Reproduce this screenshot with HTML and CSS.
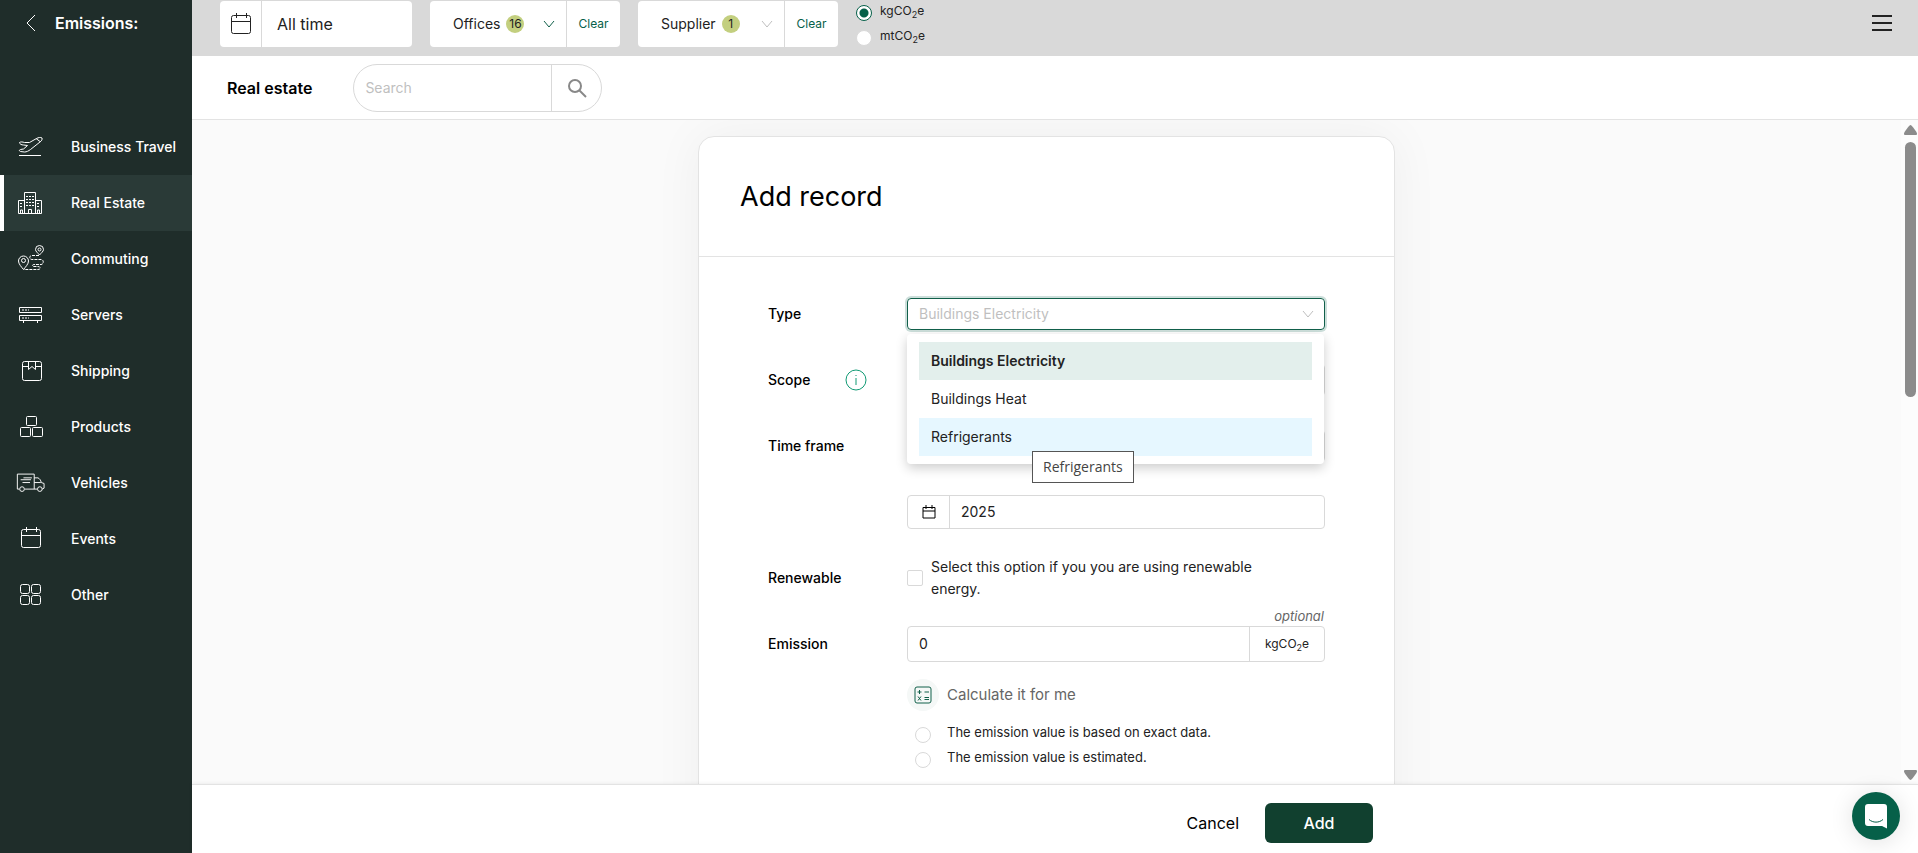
FILE: index.html
```html
<!DOCTYPE html>
<html lang="en">

<head>
  <meta charset="utf-8">
  <title>Emissions - Real estate</title>
  <link rel="stylesheet" href="styles.css">
</head>

<body>
  <aside class="sidebar">
    <div class="sidebar-header">
      <button class="back-btn" aria-label="Back">
        <svg width="10" height="18" viewBox="0 0 10 18"><path d="M9 1L1 9l8 8" /></svg>
      </button>
      <span>Emissions:</span>
    </div>

    <nav class="nav">
      <a href="#">
        <svg class="nav-icon" viewBox="0 0 30 30">
          <path d="M4 23.500h22M4.500 10.500c1.500-1 3-.5 5 0h5l7-4c2-1 4-1.500 5.500-.5.500 1.500-.5 3-2 4l-9.500 7.500c-2 1.500-4 2.500-6 2.500l-4-.5c-1.500-.5-1.500-1.500 0-2l3-.5 4-3.500-4-.5c-2 0-4-1-4-2.500zM21 6.500l4 3" />
        </svg>
        Business Travel
      </a>
      <a href="#" class="active">
        <svg class="nav-icon" viewBox="0 0 30 30">
          <path d="M9.500 25.500v-21h11v21M9.500 12.500h-6v13h23v-13h-6M13.500 25.500v-4h3v4M5.500 25v-3h2v3M22.500 25v-3h2v3" />
          <path d="M11 8.500h8M11 11.500h8M11 14.500h8M11 17.500h8M5 15.500h3M5 18.500h3M22 15.500h3M22 18.500h3" stroke-dasharray="2 1" />
        </svg>
        Real Estate
      </a>
      <a href="#">
        <svg class="nav-icon" viewBox="0 0 30 30">
          <path d="M8.500 25.500c-2-2.500-5-5.500-5-8.500a5 5 0 0 1 10 0c0 3-3 6-5 8.500zM24.500 11c-1.500-2-4-3.500-4-5.500a3.500 3.500 0 0 1 8 0c0 2-2.500 3.500-4 5.500z" />
          <circle cx="8.500" cy="16.500" r="2" />
          <circle cx="24.500" cy="5.500" r="1.500" />
          <path d="M24 11.500h-7c-3 0-3 4 0 4h9c3 0 3 5 0 5h-7c-2 0-2 2 0 2h4c3 0 3 3 0 3H9" stroke-dasharray="3 1" />
        </svg>
        Commuting
      </a>
      <a href="#">
        <svg class="nav-icon" viewBox="0 0 30 30">
          <path d="M4.500 7.500h22v5h-22zM4.500 15.500h22v5h-22zM8.500 21v2M22.500 21v2" />
          <path d="M7 10h7M7 18h7" stroke-dasharray="2 1" />
        </svg>
        Servers
      </a>
      <a href="#">
        <svg class="nav-icon" viewBox="0 0 30 30">
          <rect x="7.500" y="5.500" width="19" height="19" rx="2" />
          <path d="M7.500 10.500h6M20.500 10.500h6M13.500 5.500v8l3.500-3 3.500 3v-8" />
        </svg>
        Shipping
      </a>
      <a href="#">
        <svg class="nav-icon" viewBox="0 0 30 30">
          <rect x="11.500" y="4.500" width="10" height="9" rx="1" />
          <rect x="5.500" y="15.500" width="10" height="9" rx="1" />
          <rect x="17.500" y="15.500" width="10" height="9" rx="1" />
        </svg>
        Products
      </a>
      <a href="#">
        <svg class="nav-icon" viewBox="0 0 32 30">
          <path d="M4.500 21.500h-2v-16h18v16M10.500 21.500h13M20.500 9.500h4c2 1 3 2.500 3.500 5l3 1v5l-2 1M20.500 14.500h7M9 9.500h9M6 11.500h11M8 14.500h8" />
          <circle cx="7.500" cy="21.500" r="2.500" />
          <circle cx="26.500" cy="21.500" r="2.500" />
        </svg>
        Vehicles
      </a>
      <a href="#">
        <svg class="nav-icon" viewBox="0 0 30 30">
          <rect x="6.500" y="5.500" width="19" height="18" rx="2" />
          <path d="M6.500 11.500h19M11.500 3v5M21.500 3v5" />
        </svg>
        Events
      </a>
      <a href="#">
        <svg class="nav-icon" viewBox="0 0 30 30">
          <rect x="5.500" y="4.500" width="9" height="9" rx="2" />
          <rect x="16.500" y="4.500" width="9" height="9" rx="2" />
          <rect x="5.500" y="15.500" width="9" height="9" rx="2" />
          <rect x="16.500" y="15.500" width="9" height="9" rx="2" />
        </svg>
        Other
      </a>
    </nav>
  </aside>

  <div class="page">
    <header class="topbar">
      <div class="filter filter-date">
        <span class="filter-icon">
          <svg width="20" height="22" viewBox="0 0 20 22"><path d="M2.500 2.500h15a2 2 0 0 1 2 2v14a2 2 0 0 1-2 2h-15a2 2 0 0 1-2-2v-14a2 2 0 0 1 2-2zM.5 8.500h19M5.500 0v5M15.500 0v5" /></svg>
        </span>
        <input type="text" value="All time" aria-label="Period" readonly>
      </div>

      <div class="filter filter-offices">
        <button class="filter-main">
          Offices <span class="count">16</span>
          <svg class="chevron" width="12" height="8" viewBox="0 0 12 8"><path d="M1 1l5 6 5-6" /></svg>
        </button>
        <button class="clear-btn">Clear</button>
      </div>

      <div class="filter filter-supplier">
        <button class="filter-main">
          Supplier <span class="count">1</span>
          <svg class="chevron muted" width="12" height="8" viewBox="0 0 12 8"><path d="M1 1l5 6 5-6" /></svg>
        </button>
        <button class="clear-btn">Clear</button>
      </div>

      <div class="units">
        <label><input type="radio" name="unit" checked><span>kgCO<sub>2</sub>e</span></label>
        <label><input type="radio" name="unit"><span>mtCO<sub>2</sub>e</span></label>
      </div>

      <button class="menu-btn" aria-label="Menu">
        <svg width="20" height="18" viewBox="0 0 20 18"><path d="M0 2h20M0 9h20M0 16h20" /></svg>
      </button>
    </header>

    <div class="subheader">
      <h2>Real estate</h2>
      <form class="search">
        <input type="search" placeholder="Search" aria-label="Search">
        <button type="button" aria-label="Search">
          <svg width="20" height="20" viewBox="0 0 20 20"><circle cx="8" cy="8" r="6" /><path d="M12.500 12.500L19 19" /></svg>
        </button>
      </form>
    </div>

    <div class="content">
      <main class="scroll-area">
        <form class="card" id="record-form">
          <div class="card-header">
            <h1>Add record</h1>
          </div>

          <div class="card-body">
            <div class="row">
              <label for="type">Type</label>
              <div class="control">
                <div class="combo">
                  <input type="text" id="type" role="combobox" aria-expanded="true" aria-controls="type-list" placeholder="Buildings Electricity">
                  <svg class="chevron muted" width="12" height="8" viewBox="0 0 12 8"><path d="M1 1l5 6 5-6" /></svg>
                </div>
                <ul class="dropdown" id="type-list" role="listbox">
                  <li class="selected" role="option" aria-selected="true">Buildings Electricity</li>
                  <li role="option">Buildings Heat</li>
                  <li class="hover" role="option">Refrigerants</li>
                </ul>
                <div class="tooltip" role="tooltip">Refrigerants</div>
              </div>
            </div>

            <div class="row">
              <label for="scope">Scope</label>
              <svg class="info" width="22" height="22" viewBox="0 0 22 22"><circle cx="11" cy="11" r="10" /><path d="M11 9v7M11 6v1" /></svg>
              <div class="control"><select id="scope"></select></div>
            </div>

            <div class="row">
              <label for="timeframe">Time frame</label>
              <div class="control"><select id="timeframe"></select></div>
            </div>

            <div class="row">
              <div class="control group group-year">
                <span class="group-icon">
                  <svg width="14" height="14" viewBox="0 0 14 14"><path d="M1 2.500h12v10.500H1zM1 6h12M4 0v4M10 0v4" /></svg>
                </span>
                <input type="text" value="2025" aria-label="Year">
              </div>
            </div>

            <div class="row">
              <label for="renewable">Renewable</label>
              <div class="control check">
                <input type="checkbox" id="renewable">
                <label for="renewable">Select this option if you you are using renewable energy.</label>
              </div>
            </div>

            <div class="row">
              <label for="emission">Emission</label>
              <div class="control group">
                <span class="optional">optional</span>
                <input type="text" id="emission" value="0">
                <span class="suffix"><span>kgCO<sub>2</sub>e</span></span>
              </div>
            </div>

            <div class="extra">
              <button type="button" class="calc-btn">
                <span class="calc-icon">
                  <svg width="18" height="18" viewBox="0 0 18 18">
                    <rect x="1" y="1" width="16" height="16" rx="2" />
                    <path d="M3.500 6h4M5.500 4v4M10.500 6h4.500M4 10.500l3 4M7 10.500l-3 4M10.500 11.500h4.500M10.500 13.500h4.500" />
                  </svg>
                </span>
                Calculate it for me
              </button>
              <label class="option"><input type="radio" name="accuracy"><span>The emission value is based on exact data.</span></label>
              <label class="option"><input type="radio" name="accuracy"><span>The emission value is estimated.</span></label>
            </div>
          </div>
        </form>
      </main>

      <div class="scrollbar">
        <svg width="13" height="10" viewBox="0 0 13 10"><path d="M6.500 0c1 0 6.500 7 6.500 8.500 0 1-.5 1.500-1 1.500H1c-.5 0-1-.5-1-1.500C0 7 5.500 0 6.500 0z" /></svg>
        <div class="thumb"></div>
        <svg class="down" width="13" height="10" viewBox="0 0 13 10"><path d="M6.500 10c1 0 6.500-7 6.500-8.500C13 .5 12.500 0 12 0H1C.5 0 0 .5 0 1.500 0 3 5.500 10 6.500 10z" /></svg>
      </div>
    </div>

    <footer class="footer">
      <div class="actions">
        <button class="cancel-btn">Cancel</button>
        <button class="add-btn">Add</button>
      </div>
    </footer>
  </div>

  <button class="chat-btn" aria-label="Open chat">
    <svg width="22" height="25" viewBox="0 0 22 25">
      <path class="bubble" d="M3 0h16a3 3 0 0 1 3 3v21.500l-5-2.500H3a3 3 0 0 1-3-3V3a3 3 0 0 1 3-3z" />
      <path class="smile" d="M4 15.500c4 3.500 10 3.500 14 0" />
    </svg>
  </button>
</body>

</html>
```
FILE: styles.css
```css
* {
  box-sizing: border-box;
}

body {
  margin: 0;
  display: flex;
  height: 100vh;
  overflow: hidden;
  font-family: Inter, "Open Sans", sans-serif;
  font-size: 14px;
  line-height: 22px;
  color: #222;
  background-color: #fafafa;
}

button,
input,
select {
  font: inherit;
  color: inherit;
}

button {
  padding: 0;
  border: 0;
  background: none;
  cursor: pointer;
}

input[type="text"],
input[type="search"] {
  min-width: 0;
  border: 0;
  outline: 0;
  background: none;
}

input::placeholder {
  color: #bfbfbf;
  opacity: 1;
}

svg {
  fill: none;
  stroke: currentColor;
}

sub {
  font-size: 9px;
  line-height: 0;
}

/* Sidebar */
.sidebar {
  width: 192px;
  flex-shrink: 0;
  background-color: #1f2d2a;
  color: #fff;
}

.sidebar-header {
  display: flex;
  align-items: center;
  gap: 19px;
  height: 46px;
  padding-left: 26px;
  font-size: 16px;
  font-weight: 600;
}

.back-btn {
  display: flex;
}

.nav {
  margin-top: 73px;
}

.nav a {
  display: flex;
  align-items: center;
  gap: 26px;
  height: 56px;
  padding-left: 11px;
  border-left: 4px solid transparent;
  color: #fff;
  font-weight: 500;
  text-decoration: none;
}

.nav a.active {
  background-color: #2a3a37;
  border-left-color: #fff;
}

.nav-icon {
  width: 30px;
  height: 30px;
}

/* Top bar */
.page {
  flex: 1;
  min-width: 0;
  display: flex;
  flex-direction: column;
}

.topbar {
  display: flex;
  align-items: flex-start;
  height: 56px;
  padding: 1px 26px 0 28px;
  background-color: #d9d9d9;
}

.filter {
  display: flex;
  height: 46px;
  margin-right: 18px;
  border-radius: 4px;
  background-color: #fff;
}

.filter-date {
  width: 192px;
}

.filter-date input {
  flex: 1;
  padding: 0 15px;
  font-size: 16px;
}

.filter-icon {
  display: flex;
  align-items: center;
  justify-content: center;
  width: 42px;
  border-right: 1px solid #d9d9d9;
}

.filter-offices {
  width: 190px;
}

.filter-supplier {
  width: 200px;
}

.filter-main {
  flex: 1;
  display: flex;
  align-items: center;
  gap: 6px;
  padding: 0 11px 0 23px;
}

.count {
  min-width: 18px;
  height: 18px;
  border-radius: 9px;
  background-color: #c3cf7f;
  font-size: 12px;
  line-height: 18px;
}

.chevron {
  margin-left: auto;
  color: #11604a;
}

.chevron.muted {
  color: #bfbfbf;
}

.clear-btn {
  width: 54px;
  border-left: 1px solid #d9d9d9;
  color: #066049;
  font-size: 12px;
}

.units {
  display: flex;
  flex-direction: column;
  gap: 5px;
  font-size: 12px;
  line-height: 20px;
}

.units label {
  display: flex;
  gap: 8px;
}

.units input {
  margin-top: 4px;
}

input[type="radio"] {
  appearance: none;
  flex-shrink: 0;
  width: 16px;
  height: 16px;
  margin: 0;
  border: 1px solid #d9d9d9;
  border-radius: 50%;
  background-color: #fff;
}

/* more specific than the resets above */
.units input[type="radio"] {
  margin-top: 4px;
}

input[type="radio"]:checked {
  border-color: #066049;
  background-image: radial-gradient(circle, #066049 4px, transparent 5px);
}

.menu-btn {
  margin: 13px 0 0 auto;
  display: flex;
}

.menu-btn svg {
  stroke-width: 2;
}

/* Page title and search */
.subheader {
  display: flex;
  align-items: center;
  gap: 41px;
  height: 64px;
  padding-left: 35px;
  border-bottom: 1px solid #e3e3e3;
  background-color: #fff;
}

h2 {
  margin: 0;
  color: #000;
  font-size: 16px;
  font-weight: 600;
}

.search {
  display: flex;
  width: 249px;
  height: 48px;
  border: 1px solid #d9d9d9;
  border-radius: 24px;
}

.search input {
  flex: 1;
  padding: 0 11px;
}

.search button {
  display: flex;
  align-items: center;
  justify-content: center;
  width: 50px;
  border-left: 1px solid #d9d9d9;
  color: #888;
}

.search svg {
  stroke-width: 2;
}

/* Form card */
.content {
  flex: 1;
  min-height: 0;
  display: flex;
}

.scroll-area {
  flex: 1;
  overflow: hidden;
  padding: 16px 0;
}

.card {
  width: 697px;
  min-height: 900px;
  margin: 0 auto;
  border: 1px solid #e3e3e3;
  border-radius: 16px;
  background-color: #fff;
  box-shadow: 0 0 50px rgba(0, 0, 0, 0.05);
}

.card-header {
  display: flex;
  align-items: center;
  height: 120px;
  padding-left: 41px;
  border-bottom: 1px solid #e3e3e3;
}

h1 {
  margin: 0;
  color: #000;
  font-size: 27px;
  font-weight: 400;
}

.card-body {
  padding: 24px 69px;
}

.row {
  display: flex;
  align-items: center;
  height: 66px;
}

.row > label {
  color: #000;
  font-weight: 500;
}

.info {
  margin-left: 35px;
  color: #109a74;
}

.control {
  position: relative;
  width: 418px;
  margin-left: auto;
}

.combo {
  display: flex;
  align-items: center;
  height: 32px;
  padding: 0 10px;
  border: 1px solid #11604a;
  border-radius: 4px;
  box-shadow: 0 0 0 2px rgba(6, 96, 73, 0.2);
}

.combo input {
  flex: 1;
  padding: 0 1px;
}

.control select {
  display: block;
  width: 100%;
  height: 32px;
  border: 1px solid #d9d9d9;
  border-radius: 4px;
  background-color: #fff;
}

/* Open list under the Type field */
.dropdown {
  position: absolute;
  top: 36px;
  left: 0;
  right: 1px;
  z-index: 1;
  margin: 0;
  padding: 8px 12px;
  border-radius: 4px;
  background-color: #fff;
  box-shadow: 0 4px 12px rgba(0, 0, 0, 0.2);
  list-style: none;
}

.dropdown li {
  padding: 8px 12px;
}

.dropdown .selected {
  background-color: #e3efec;
  font-weight: 600;
}

.dropdown .hover {
  background-color: #e6f7ff;
}

.tooltip {
  position: absolute;
  top: 153px;
  left: 125px;
  z-index: 2;
  padding: 4px 10px;
  border: 1px solid #555;
  background-color: #fff;
  color: #444;
  font-family: "Open Sans", sans-serif;
}

.group {
  display: flex;
  height: 36px;
  border: 1px solid #d9d9d9;
  border-radius: 4px;
}

.group-year {
  height: 34px;
}

.group input {
  flex: 1;
  padding: 0 11px;
}

.group-icon {
  display: flex;
  align-items: center;
  justify-content: center;
  width: 42px;
  border-right: 1px solid #d9d9d9;
  color: #000;
}

.suffix {
  display: flex;
  align-items: center;
  justify-content: center;
  width: 75px;
  border-left: 1px solid #d9d9d9;
  font-size: 12px;
}

.optional {
  position: absolute;
  right: 0;
  bottom: 34px;
  color: #666;
  font-size: 13px;
  font-style: italic;
}

.check {
  display: flex;
  align-items: center;
  gap: 8px;
}

.check input {
  appearance: none;
  flex-shrink: 0;
  width: 16px;
  height: 16px;
  margin: 0;
  border: 1px solid #d9d9d9;
  border-radius: 2px;
}

.check label {
  max-width: 350px;
}

.extra {
  width: 418px;
  margin: 2px 0 0 auto;
}

.calc-btn {
  display: flex;
  align-items: center;
  gap: 8px;
  margin-bottom: 10px;
  color: #666;
  font-size: 15px;
}

.calc-icon {
  display: flex;
  align-items: center;
  justify-content: center;
  width: 32px;
  height: 32px;
  border-radius: 50%;
  background-color: #f5f8f7;
  color: #11604a;
}

.option {
  display: flex;
  gap: 16px;
  height: 25px;
  padding-left: 8px;
  font-size: 13px;
}

.option input[type="radio"] {
  margin-top: 6px;
}

/* Scrollbar */
.scrollbar {
  width: 17px;
  display: flex;
  flex-direction: column;
  align-items: center;
  padding: 5px 0 4px 1px;
  background-color: #fcfcfc;
  color: #8b8b8b;
}

.scrollbar svg {
  fill: currentColor;
  stroke: none;
}

.thumb {
  width: 11px;
  height: 39%;
  margin-top: 7px;
  border-radius: 6px;
  background-color: #8b8b8b;
}

.scrollbar .down {
  margin-top: auto;
}

/* Footer */
.footer {
  height: 69px;
  padding-right: 17px;
  border-top: 1px solid #e3e3e3;
  background-color: #fff;
  box-shadow: 0 0 4px rgba(0, 0, 0, 0.08);
}

.actions {
  display: flex;
  align-items: center;
  justify-content: flex-end;
  gap: 26px;
  width: 697px;
  height: 100%;
  margin: 0 auto;
  padding: 8px 22px 0 0;
  font-size: 16px;
}

.cancel-btn {
  color: #000;
}

.add-btn {
  width: 108px;
  height: 40px;
  border-radius: 6px;
  background-color: #11402f;
  color: #fff;
  font-weight: 500;
}

.chat-btn {
  position: fixed;
  right: 18px;
  bottom: 13px;
  width: 48px;
  height: 48px;
  display: flex;
  align-items: center;
  justify-content: center;
  border-radius: 50%;
  background-color: #066049;
  box-shadow: 0 2px 24px rgba(0, 0, 0, 0.12);
}

.chat-btn .bubble {
  fill: #fff;
  stroke: none;
}

.chat-btn .smile {
  stroke: #066049;
}
```
